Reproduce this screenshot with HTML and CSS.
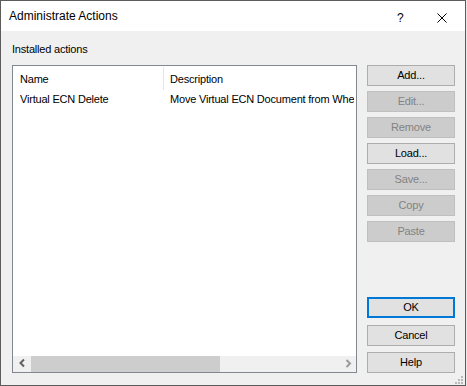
FILE: index.html
```html
<!DOCTYPE html>
<html>
<head>
<meta charset="utf-8">
<title>Administrate Actions</title>
<link rel="stylesheet" href="styles.css">
</head>
<body>
<div class="window">
  <div class="titlebar">
    <span class="title">Administrate Actions</span>
    <span class="help">?</span>
    <svg class="close" width="10" height="10" viewBox="0 0 10 10"><path d="M0.5 0.5 L9.5 9.5 M9.5 0.5 L0.5 9.5" stroke="#000" stroke-width="1" fill="none"/></svg>
  </div>
  <div class="content">
    <div class="label">Installed actions</div>
    <div class="listbox">
      <div class="list-area">
        <div class="header">
          <div class="cell name hcell">Name</div>
          <div class="cell desc">Description</div>
        </div>
        <div class="row">
          <div class="cell name">Virtual ECN Delete</div>
          <div class="cell desc">Move Virtual ECN Document from Whe</div>
        </div>
      </div>
      <div class="hscroll">
        <div class="arrow">
          <svg width="17" height="16" viewBox="0 0 17 16"><polyline points="11,3.5 7.5,7 11,10.5" fill="none" stroke="#606060" stroke-width="2"/></svg>
        </div>
        <div class="thumb"></div>
        <div class="track"></div>
        <div class="arrow">
          <svg width="17" height="16" viewBox="0 0 17 16"><polyline points="7.5,4 11,7.5 7.5,11" fill="none" stroke="#9a9a9a" stroke-width="2"/></svg>
        </div>
      </div>
    </div>
    <div class="buttons">
      <div class="btn">Add...</div>
      <div class="btn disabled">Edit...</div>
      <div class="btn disabled">Remove</div>
      <div class="btn">Load...</div>
      <div class="btn disabled">Save...</div>
      <div class="btn disabled">Copy</div>
      <div class="btn disabled">Paste</div>
      <div class="btn default ok">OK</div>
      <div class="btn cancel">Cancel</div>
      <div class="btn helpbtn">Help</div>
    </div>
  </div>
  <svg class="grip" width="10" height="10" viewBox="0 0 10 10">
    <rect x="7" y="1" width="2" height="2" fill="#b9b9b9"/>
    <rect x="4" y="4" width="2" height="2" fill="#b9b9b9"/>
    <rect x="7" y="4" width="2" height="2" fill="#b9b9b9"/>
    <rect x="1" y="7" width="2" height="2" fill="#b9b9b9"/>
    <rect x="4" y="7" width="2" height="2" fill="#b9b9b9"/>
    <rect x="7" y="7" width="2" height="2" fill="#b9b9b9"/>
  </svg>
</div>
</body>
</html>
```
FILE: styles.css
```css
html, body {
  margin: 0;
  padding: 0;
}
body {
  background: #e8e8e8;
  font-family: "Liberation Sans", Arial, sans-serif;
  font-size: 11px;
  color: #000;
}
.window {
  box-sizing: border-box;
  width: 466px;
  height: 386px;
  border: 1px solid #5c5c5c;
  background: #f0f0f0;
  display: flex;
  flex-direction: column;
  position: relative;
}
.titlebar {
  height: 30px;
  background: #fff;
  display: flex;
  align-items: flex-start;
  font-size: 12px;
  line-height: 30px;
}
.title {
  flex: 1;
  padding-left: 8px;
}
.help {
  width: 8px;
  line-height: 34px;
  margin-right: 32px;
}
.close {
  margin-top: 12px;
  margin-right: 18px;
}
.content {
  flex: 1;
  display: grid;
  grid-template-columns: 345px 88px;
  grid-template-rows: 13px 308px;
  column-gap: 10px;
  row-gap: 9px;
  padding: 12px 10px 12px 11px;
  letter-spacing: -0.2px;
}
.label {
  grid-column: 1;
  grid-row: 1;
  line-height: 13px;
}
.listbox {
  grid-column: 1;
  grid-row: 2;
  box-sizing: border-box;
  border: 1px solid #828790;
  background: #fff;
  display: flex;
  flex-direction: column;
  overflow: hidden;
}
.list-area {
  flex: 1;
  overflow: hidden;
}
.header {
  display: flex;
  height: 24px;
}
.header .cell {
  margin-top: 1px;
  height: 23px;
  line-height: 22px;
  padding-top: 1px;
  box-sizing: border-box;
}
.cell {
  white-space: nowrap;
  box-sizing: border-box;
}
.name {
  width: 151px;
  flex: none;
  padding-left: 7px;
}
.hcell {
  border-right: 1px solid #e5e5e5;
}
.desc {
  padding-left: 6px;
  overflow: hidden;
}
.row {
  display: flex;
  height: 18px;
  padding-top: 1px;
  line-height: 17px;
  box-sizing: border-box;
}
.hscroll {
  height: 16px;
  display: flex;
  background: #f0f0f0;
  flex: none;
}
.arrow {
  width: 17px;
  height: 16px;
  flex: none;
}
.arrow svg {
  display: block;
}
.thumb {
  width: 189px;
  margin-left: 1px;
  background: #cdcdcd;
  flex: none;
}
.track {
  flex: 1;
}
.buttons {
  grid-column: 2;
  grid-row: 2;
  display: flex;
  flex-direction: column;
  gap: 5px;
}
.btn {
  box-sizing: border-box;
  height: 21px;
  border: 1px solid #adadad;
  background: #e1e1e1;
  text-align: center;
  line-height: 19px;
  white-space: nowrap;
}
.btn.disabled {
  background: #cccccc;
  border-color: #bfbfbf;
  color: #838383;
}
.btn.default {
  border-color: #0078d7;
  box-shadow: inset 0 0 0 1px #0078d7;
}
.ok {
  margin-top: auto;
}
.cancel {
  margin-top: 2px;
}
.helpbtn {
  margin-top: 1px;
}
.grip {
  position: absolute;
  right: 1px;
  bottom: 0px;
}
```
